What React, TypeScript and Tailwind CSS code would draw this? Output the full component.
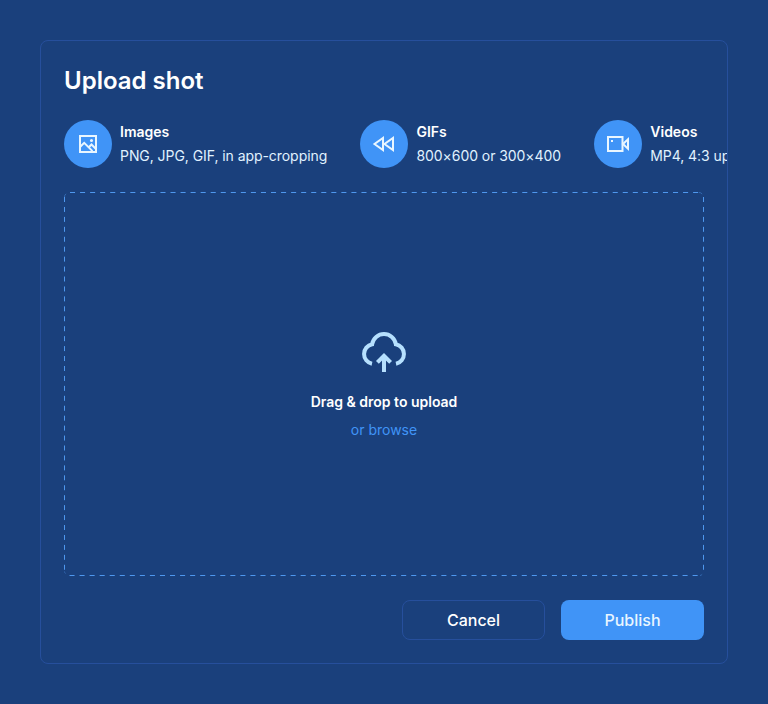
import type { ReactNode } from "react";

function Feature({ icon, title, text }: { icon: ReactNode; title: string; text: string }) {
  return (
    <li className="flex shrink-0 items-center gap-2">
      <span className="flex size-12 items-center justify-center rounded-full bg-[#4094f7] text-[#e9f6ff]">{icon}</span>
      <span className="flex flex-col whitespace-nowrap text-sm leading-6 text-[#e0f2ff]">
        <strong className="font-semibold text-white">{title}</strong>
        <span className="tracking-[-0.06px]">{text}</span>
      </span>
    </li>
  );
}

const ImageIcon = () => (
  <svg className="size-6" viewBox="0 0 24 24" fill="none" stroke="currentColor" strokeWidth="2">
    <path d="M4 4h16v16H4z" />
    <path d="m4 15 4.2-4.2 8.3 8.3" />
    <path d="m12.5 15.5 3-3L20 17" />
    <circle cx="15.5" cy="8.5" r="1.5" fill="currentColor" stroke="none" />
  </svg>
);

const RewindIcon = () => (
  <svg className="size-6" viewBox="0 0 24 24" fill="none" stroke="currentColor" strokeWidth="2">
    <path d="M11 6v12l-8.5-6z" />
    <path d="M21 6v12l-8.5-6z" />
  </svg>
);

const VideoIcon = () => (
  <svg className="size-6" viewBox="0 0 24 24" fill="none" stroke="currentColor" strokeWidth="2">
    <path d="M2 5h14.5v14H2z" />
    <path d="m17 12 5-4.7v9.4z" />
    <path d="M5 9h2" />
  </svg>
);

const CloudIcon = () => (
  <svg className="size-12" viewBox="0 0 24 24" fill="none" stroke="currentColor" strokeWidth="2">
    <path d="M6 17.9A5 5 0 0 1 6.07 8.1 6 6 0 0 1 17.93 8.1 5 5 0 0 1 18 17.9" />
    <path d="M12 22v-8" />
    <path d="m8.7 17.2 3.3-3.3 3.3 3.3" />
  </svg>
);

const DashedFrame = () => (
  <svg className="absolute inset-0 size-full" viewBox="0 0 640 384" fill="none" stroke="#4f98ee">
    <path d="M6 .5h629" strokeDasharray="5.05 5" />
    <path d="M5.5 383.5h629.5" strokeDasharray="5.05 5" />
    <path d="M.5 5v374.5" strokeDasharray="5 4.94" />
    <path d="M639.5 5v374.5" strokeDasharray="5 4.94" />
    <path d="M.5 5q0-2 1.5-3.2M635 .5q2 0 3.2 1.5M.5 379.5q0 1 1 2M636 383.5q1.2 0 2.2-1.2" strokeOpacity="0.45" />
  </svg>
);

export default function App() {
  return (
    <main className="h-[704px] w-[768px] bg-[#1a407c] p-10 font-[Inter,sans-serif] text-white">
      <section className="flex h-[624px] flex-col overflow-hidden rounded-lg border border-[#264f9c] px-[23px] py-[23px]">
        <h1 className="h-8 pt-px text-2xl font-semibold leading-8">Upload shot</h1>
        <ul className="mt-6 flex gap-[33.2px]">
          <Feature icon={<ImageIcon />} title="Images" text="PNG, JPG, GIF, in app-cropping" />
          <Feature icon={<RewindIcon />} title="GIFs" text="800×600 or 300×400" />
          <Feature icon={<VideoIcon />} title="Videos" text="MP4, 4:3 up to 60sec" />
        </ul>
        <div className="relative mt-6 flex h-96 flex-col items-center justify-center text-sm leading-5">
          <DashedFrame />
          <span className="text-[#b6e0fe]">
            <CloudIcon />
          </span>
          <p className="mt-4 font-semibold">Drag &amp; drop to upload</p>
          <button className="mt-2 text-[#4094f7]">or browse</button>
        </div>
        <div className="mt-6 flex justify-end gap-4 font-medium leading-6">
          <button className="h-10 w-[143px] rounded-lg border border-[#264f9c]">Cancel</button>
          <button className="h-10 w-[143px] rounded-lg bg-[#4094f7] text-[#e9f6ff]">Publish</button>
        </div>
      </section>
    </main>
  );
}
